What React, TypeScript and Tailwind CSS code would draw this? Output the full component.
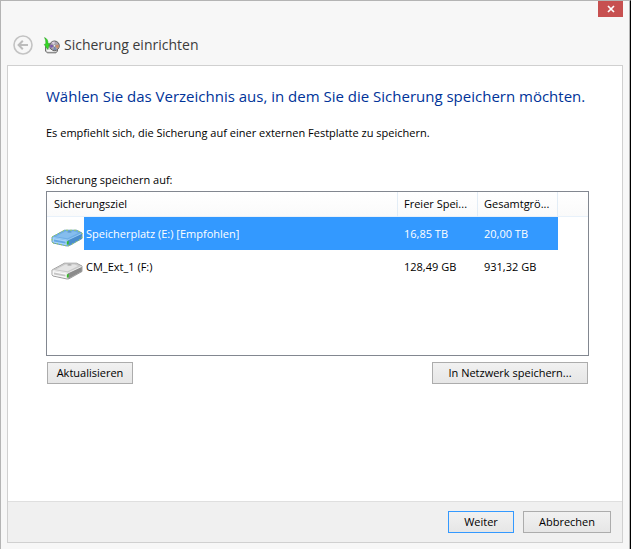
import { useId, useState } from "react";
import clsx from "clsx";

type Target = {
  id: string;
  name: string;
  free: string;
  total: string;
};

const targets: Target[] = [
  {
    id: "e",
    name: "Speicherplatz (E:) [Empfohlen]",
    free: "16,85 TB",
    total: "20,00 TB",
  },
  { id: "f", name: "CM_Ext_1 (F:)", free: "128,49 GB", total: "931,32 GB" },
];

function BackIcon() {
  return (
    <svg viewBox="0 0 20 20" className="h-5 w-5" fill="none" aria-hidden="true">
      <circle cx="10" cy="10" r="9" stroke="#c3c3c3" strokeWidth="1.6" />
      <path
        d="M15 10H6M9.8 5.8 5.6 10l4.2 4.2"
        stroke="#bcbcbc"
        strokeWidth="2"
      />
    </svg>
  );
}

function BackupIcon() {
  return (
    <svg viewBox="0 0 17 17" className="h-[17px] w-[17px]" aria-hidden="true">
      <path
        d="M2.5 9.5 5 8h7l2.5 4.5V14L13 15.8H4.2L2.500 14z"
        fill="#d4d4d4"
        stroke="#6d6d6d"
      />
      <path d="M3.8 12.8h6.500v1.800H4.500z" fill="#f8f8f8" />
      <circle cx="11.500" cy="8.800" r="4.800" fill="#aaa3ad" stroke="#5f5f5f" />
      <path d="M11.500 8.800 8.600 5.400a4.400 4.400 0 0 1 3-1z" fill="#ddd2e2" />
      <path d="M11.500 8.800 7.400 7.500a4.300 4.300 0 0 0 .4 3.500z" fill="#7a58b0" />
      <path d="m11.500 8.800 4.100-1.200a4.300 4.300 0 0 1-.8 4z" fill="#cf8f66" />
      <path d="m11.500 8.800 1.800 3.900a4.300 4.300 0 0 1-3 .2z" fill="#7588b4" />
      <circle
        cx="11.500"
        cy="8.800"
        r="1.200"
        fill="#f6f6f6"
        stroke="#666666"
        strokeWidth="0.5"
      />
      <path
        d="M1.500.6C4 1.600 5.200 3.600 5 6.600l1.700-.4-1.900 6.200L1.200 7.400l1.500-.3C3 4.600 2.600 2.500 1.500.6z"
        fill="#35d824"
        stroke="#259a1e"
        strokeWidth="0.5"
      />
    </svg>
  );
}

function DriveIcon({ selected }: { selected: boolean }) {
  const c = selected
    ? { edge: "#4a86b4", top: "#6eaee6", light: "#85bdee", front: "#64a8e4", side: "#4a8ccc", shine: "#a5d2f8" }
    : { edge: "#8a8a8a", top: "#c9c9c9", light: "#e4e4e4", front: "#c6c6c6", side: "#8b8b8b", shine: "#f8f8f8" };
  return (
    <svg viewBox="0 0 32 18" className="h-[18px] w-8" aria-hidden="true">
      <path
        d="M1 8 13.500 1.200h12L31 4v5.500L18 16.800 16 17 2 14 1 12.500z"
        fill={c.front}
        stroke={c.edge}
        strokeWidth="0.8"
      />
      <path d="M1.400 8 13.700 1.600h11.600l5.200 2.600L17 10.500z" fill={c.top} />
      <path d="m5 7.500 9.500-5h9l3.600 1.600-10.500 5.200z" fill={c.light} />
      <path d="M17 11 30.600 4.800v4.400L17.500 16.600z" fill={c.side} />
      <path d="m1.500 8.800 15 2.700v4.900L2.200 13.500l-.7-1.200z" fill={c.shine} />
      <path d="m3 10.600 11.500 2.200v1.800L3 12.400z" fill={c.front} />
      <path
        d="M1.400 8.200 16.800 11 30.600 4.500"
        fill="none"
        stroke={c.shine}
        strokeWidth="0.8"
      />
      <ellipse cx="18.500" cy="2.900" rx="2.200" ry="0.7" fill={c.edge} opacity="0.8" />
      <path d="m15.800 12.400 1.900-.6v3.400l-1.900.6z" fill="#36b82a" />
      {selected && (
        <path
          d="M1 8 13.500 1.200h12L31 4v5.500L18 16.800 16 17 2 14 1 12.500z"
          fill="none"
          stroke="#a6dc3a"
          strokeWidth="0.9"
          strokeDasharray="1.500 2.500"
        />
      )}
    </svg>
  );
}

function DialogButton({
  children,
  className,
}: {
  children: string;
  className?: string;
}) {
  return (
    <button
      type="button"
      className={clsx(
        "border bg-linear-to-b from-[#f1f1f1] to-[#e6e6e6] text-center whitespace-nowrap",
        className
      )}
    >
      {children}
    </button>
  );
}

export default function App() {
  const [selectedId, setSelectedId] = useState("e");
  const labelId = useId();
  const headCell =
    "border-r border-b border-r-[#e3edf6] border-b-[#e8f1fa] font-normal whitespace-nowrap";

  return (
    <div className="flex min-h-screen flex-col border-t border-r border-l border-t-[#b4b4b4] border-r-black border-l-[#b4b4b4] bg-[#f7f7f7] font-['Open_Sans','Noto_Sans',sans-serif] text-[11px] leading-4 text-black">
      <div className="flex flex-1 flex-col border-r border-[#b4b4b4] px-1.5 pb-1.5">
        <div className="flex h-4 justify-end">
          <button
            type="button"
            aria-label="Schließen"
            className="flex h-4 w-[25px] items-center justify-center bg-[#c75050]"
          >
            <svg viewBox="0 0 8 8" className="h-2 w-2" aria-hidden="true">
              <path d="m1 1 6 6M7 1 1 7" stroke="white" strokeWidth="1.7" />
            </svg>
          </button>
        </div>

        <header className="flex h-12 items-center pb-2 pl-1.5">
          <div className="flex h-6 items-center pt-4">
            <button type="button" aria-label="Zurück" disabled>
              <BackIcon />
            </button>
            <span className="ml-2.5">
              <BackupIcon />
            </span>
            <h1 className="ml-1 text-[14px] leading-6 text-[#3c3c3c]">
              Sicherung einrichten
            </h1>
          </div>
        </header>

        <main className="flex flex-1 flex-col border border-[#d0d0d0] bg-white">
          <div className="flex-1 pt-[18px] pr-[33px] pl-[38px]">
            <h2 className="text-[15px] leading-6 whitespace-nowrap text-[#003399]">
              Wählen Sie das Verzeichnis aus, in dem Sie die Sicherung speichern
              möchten.
            </h2>
            <p className="mt-[17px] whitespace-nowrap">
              Es empfiehlt sich, die Sicherung auf einer externen Festplatte zu
              speichern.
            </p>

            <p id={labelId} className="mt-[31px]">
              Sicherung speichern auf:
            </p>
            <div className="mt-[3px] min-h-[165px] border border-[#828790]">
              <table
                aria-labelledby={labelId}
                className="w-full table-fixed border-separate border-spacing-0 text-left"
              >
                <colgroup>
                  <col className="w-[37px]" />
                  <col />
                  <col className="w-20" />
                  <col className="w-20" />
                  <col className="w-[30px]" />
                </colgroup>
                <thead>
                  <tr className="h-[25px] bg-linear-to-b from-white to-[#fafafa]">
                    <th colSpan={2} className={clsx("pl-[7px]", headCell)}>
                      Sicherungsziel
                    </th>
                    <th className={clsx("pl-1.5", headCell)}>Freier Spei...</th>
                    <th className={clsx("pl-1.5", headCell)}>Gesamtgrö...</th>
                    <td className="border-b border-[#e8f1fa]" />
                  </tr>
                </thead>
                <tbody>
                  {targets.map((t) => {
                    const selected = t.id === selectedId;
                    const cell = selected ? "bg-[#3399ff] text-white" : "";
                    return (
                      <tr
                        key={t.id}
                        aria-selected={selected}
                        onClick={() => setSelectedId(t.id)}
                        className="h-[33px]"
                      >
                        <td className="pt-2 pl-1">
                          <DriveIcon selected={selected} />
                        </td>
                        <td className={clsx("truncate pl-0.5", cell)}>
                          {t.name}
                        </td>
                        <td className={clsx("pl-1.5 whitespace-nowrap", cell)}>
                          {t.free}
                        </td>
                        <td className={clsx("pl-1.5 whitespace-nowrap", cell)}>
                          {t.total}
                        </td>
                        <td />
                      </tr>
                    );
                  })}
                </tbody>
              </table>
            </div>

            <div className="mt-1.5 flex justify-between px-px">
              <DialogButton className="h-[22px] w-[86px] border-[#acacac]">
                Aktualisieren
              </DialogButton>
              <DialogButton className="h-[22px] w-[156px] border-[#acacac]">
                In Netzwerk speichern...
              </DialogButton>
            </div>
          </div>

          <footer className="flex justify-end gap-[9px] border-t border-[#dfdfdf] bg-[#f0f0f0] px-[11px] py-[9px]">
            <DialogButton className="h-[22px] w-[66px] border-[#3399ff]">
              Weiter
            </DialogButton>
            <DialogButton className="h-[22px] w-[88px] border-[#acacac]">
              Abbrechen
            </DialogButton>
          </footer>
        </main>
      </div>
    </div>
  );
}
